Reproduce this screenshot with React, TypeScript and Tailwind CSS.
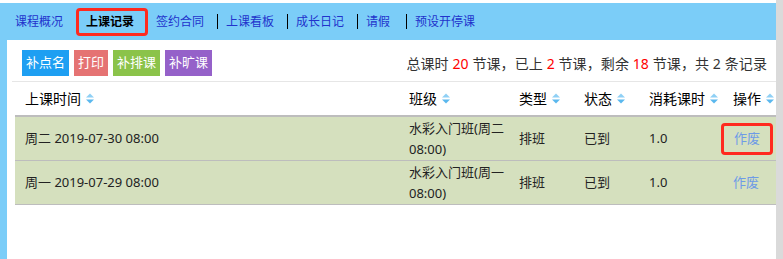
import React from "react";

const tabs = ["上课看板", "成长日记", "请假", "预设开停课"];

const buttons = [
  { label: "补点名", cls: "bg-[#1e9ff2]" },
  { label: "打印", cls: "bg-[#e57373]" },
  { label: "补排课", cls: "bg-[#8bc34a]" },
  { label: "补旷课", cls: "bg-[#9561c9]" },
];

const headers = ["上课时间", "班级", "类型", "状态", "消耗课时", "操作"];

const rows = [
  { time: "周二 2019-07-30 08:00", cls: "水彩入门班(周二 08:00)", marked: true },
  { time: "周一 2019-07-29 08:00", cls: "水彩入门班(周一 08:00)", marked: false },
];

function SortIcon() {
  return (
    <svg width="8" height="11" viewBox="0 0 8 11" className="ml-[5px] shrink-0">
      <path d="M0 4.5 L4 0.5 L8 4.5 Z" fill="#8fd0f5" />
      <path d="M0 6.5 L4 10.5 L8 6.5 Z" fill="#5bb8ee" />
    </svg>
  );
}

const cols = "grid grid-cols-[384px_110px_65px_65px_84px_1fr]";

export default function App() {
  return (
    <div className="flex w-[783px] h-[259px] overflow-hidden bg-white font-['Noto_Sans','Noto_Sans_CJK_SC',sans-serif] text-[#222]">
      <div className="flex flex-col flex-1 pt-[3px]">
        {/* Top tabs */}
        <div className="flex items-center h-[37px] bg-[#7bcdf8] pl-[15px] text-[12px] text-[#2233cc]">
          <span>课程概况</span>
          <span className="ml-[13px] pl-[7px] pr-[11px] h-[28px] flex items-center border-[3px] border-[#ff2a1f] rounded-[4px] font-bold text-black">
            上课记录
          </span>
          <span className="ml-[8px]">签约合同</span>
          {tabs.map((t, i) => (
            <React.Fragment key={t}>
              <span className={`${i === 3 ? "ml-[16px]" : "ml-[13px]"} mr-[8px] w-px h-[15px] bg-black`} />
              <span>{t}</span>
            </React.Fragment>
          ))}
        </div>

        <div className="flex flex-1">
          <div className="w-[7px] bg-[#7bcdf8]" />
          <div className="flex-1 flex flex-col">
            {/* Toolbar */}
            <div className="flex items-center justify-between pl-[15px] pr-[9px] pt-[10px]">
              <div className="flex gap-[5px]">
                {buttons.map((b) => (
                  <span key={b.label} className={`${b.cls} h-[26px] px-[4px] flex items-center text-[13px] text-white`}>
                    {b.label}
                  </span>
                ))}
              </div>
              <div className="text-[14px] text-[#333] tracking-[0.1px]">
                总课时 <span className="text-[#ff0000]">20</span> 节课，已上 <span className="text-[#ff0000]">2</span> 节课，剩余{" "}
                <span className="text-[#ff0000]">18</span> 节课，共 2 条记录
              </div>
            </div>
            <div className="ml-[5px] mt-[5px] border-t border-[#e6e6e6]" />

            {/* Table */}
            <div className="ml-[8px]">
              <div className={`${cols} h-[35px] border-b-2 border-[#bdbdbd] text-[14px] text-black`}>
                {headers.map((h) => (
                  <div key={h} className="flex items-center pl-[10px]">
                    {h}
                    <SortIcon />
                  </div>
                ))}
              </div>
              {rows.map((r) => (
                <div key={r.time} className={`${cols} h-[44px] bg-[#d5e0be] border-b border-[#bdbdbd] text-[13px]`}>
                  <div className="flex items-center pl-[10px]">{r.time}</div>
                  <div className="flex items-center pl-[10px] leading-[21px]">{r.cls}</div>
                  <div className="flex items-center pl-[10px]">排班</div>
                  <div className="flex items-center pl-[10px]">已到</div>
                  <div className="flex items-center pl-[10px]">1.0</div>
                  <div className="flex items-center pl-[10px]">
                    {r.marked ? (
                      <span className="-ml-[12px] h-[32px] px-[10px] flex items-center border-[3px] border-[#ff2a1f] rounded-[4px] text-[#6e9be6]">
                        作废
                      </span>
                    ) : (
                      <span className="text-[#6e9be6]">作废</span>
                    )}
                  </div>
                </div>
              ))}
            </div>
          </div>
        </div>
      </div>
      <div className="w-[7px] bg-[#dadada]" />
    </div>
  );
}
